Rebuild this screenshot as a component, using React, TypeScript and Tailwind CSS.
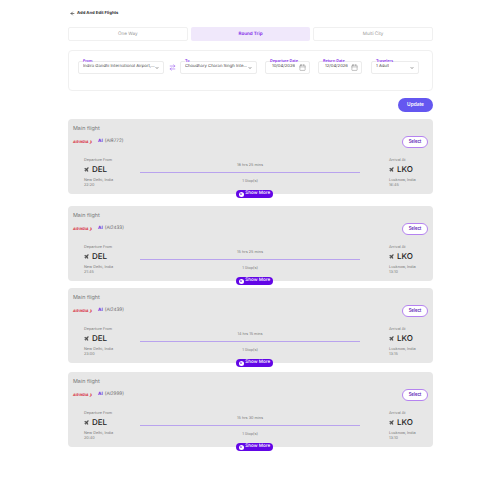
import { Plane, ArrowLeft, ChevronDown, Calendar, ArrowRightLeft, ChevronsDown } from "lucide-react";

const flights = [
  { code: "(AI8772)", dur: "18 hrs 25 mins", dep: "22:20", arr: "16:45", mt: "mt-[7px]" },
  { code: "(AI2433)", dur: "15 hrs 25 mins", dep: "21:45", arr: "13:10", mt: "mt-[12px]" },
  { code: "(AI2439)", dur: "14 hrs 15 mins", dep: "23:00", arr: "13:15", mt: "mt-[7px]" },
  { code: "(AI2999)", dur: "15 hrs 30 mins", dep: "20:40", arr: "13:10", mt: "mt-[9px]" },
];

function Field({ label, value, w, icon }: { label: string; value: string; w: string; icon: "down" | "cal" }) {
  return (
    <div className={`relative flex h-[13px] items-center justify-between rounded-[2px] border border-[#ececec] bg-white ${icon === "cal" ? "pl-[6px] pr-[3px]" : "px-[4px]"} ${w}`}>
      <span className="absolute left-[4px] top-[-4px] bg-white text-[3.8px] font-semibold leading-[5px] text-[#7c22e8]">{label}</span>
      <span className="truncate text-[4.2px] text-[#444]">{value}</span>
      {icon === "down" ? (
        <ChevronDown className="h-[4px] w-[4px] shrink-0 text-[#222]" strokeWidth={3} />
      ) : (
        <Calendar className="h-[7px] w-[7px] shrink-0 text-[#777]" strokeWidth={1.5} />
      )}
    </div>
  );
}

function Card({ f }: { f: (typeof flights)[number] }) {
  return (
    <div className={`relative h-[75px] rounded-[4px] bg-[#e7e7e7] px-[5px] pt-[7px] ${f.mt}`}>
      <div className="text-[5.4px] leading-[7px] text-[#777]">Main flight</div>
      <div className="mt-[2px] flex h-[14px] items-center justify-between">
        <div className="flex items-center gap-[5px]">
          <span className="w-[20px] whitespace-nowrap text-[3.3px] font-bold italic text-[#d81f3a]">AIR INDIA ❯</span>
          <span className="flex items-center gap-[2px] text-[4.6px] text-[#666]">
            <b className="text-[#6a2be0]">AI</b>
            {f.code}
          </span>
        </div>
        <button className="h-[12px] w-[26px] rounded-full border border-[#b583f0] bg-white text-[4.2px] font-semibold text-[#5b21b6]">
          Select
        </button>
      </div>
      <div className="mt-[8px] flex pl-[11px] pr-[6px]">
        <div className="w-[56px]">
          <div className="text-[3.8px] leading-[6px] text-[#777]">Departure From</div>
          <div className="mt-[1px] flex items-center gap-[3px] text-[8px] font-medium leading-[10px] text-[#222]">
            <Plane className="h-[5px] w-[5px] text-[#444]" fill="#444" />
            DEL
          </div>
          <div className="mt-[3px] text-[3.8px] leading-[5px] text-[#777]">New Delhi, India</div>
          <div className="text-[3.8px] leading-[6px] text-[#777]">{f.dep}</div>
        </div>
        <div className="w-[220px] pt-[5px] text-center">
          <div className="text-[3.8px] leading-[5px] text-[#777]">{f.dur}</div>
          <div className="mt-[5px] h-px bg-[#b9a3ee]" />
          <div className="mt-[5px] text-[3.8px] leading-[5px] text-[#777]">1 Stop(s)</div>
        </div>
        <div className="ml-[29px]">
          <div className="text-[3.8px] leading-[6px] text-[#777]">Arrival At</div>
          <div className="mt-[1px] flex items-center gap-[3px] text-[8px] font-medium leading-[10px] text-[#222]">
            <Plane className="h-[5px] w-[5px] text-[#444]" fill="#444" />
            LKO
          </div>
          <div className="mt-[3px] whitespace-nowrap text-[3.8px] leading-[5px] text-[#777]">Lucknow, India</div>
          <div className="text-[3.8px] leading-[6px] text-[#777]">{f.arr}</div>
        </div>
      </div>
      <div className="absolute bottom-[-4px] left-[168px] flex h-[8px] w-[37px] items-center justify-center gap-[1.5px] rounded-full bg-[#6206e6] text-[4.6px] font-medium text-white">
        <span className="flex h-[5px] w-[5px] items-center justify-center rounded-full bg-white">
          <ChevronsDown className="h-[4px] w-[4px] text-[#6206e6]" strokeWidth={3} />
        </span>
        <span className="pt-[1px]">Show More</span>
      </div>
    </div>
  );
}

export default function App() {
  return (
    <div className="min-h-[500px] bg-white pl-[68px] pr-[67px] pt-[10px] font-['Inter',sans-serif] [text-rendering:geometricPrecision]">
      <div className="flex h-[7px] items-center gap-[2px] pl-[2px] text-[4.2px] font-bold text-[#333]">
        <ArrowLeft className="h-[5px] w-[5px]" strokeWidth={3} />
        <span className="pt-[1px]">Add And Edit Flights</span>
      </div>
      <div className="mt-[10px] grid grid-cols-3 gap-[3px]">
        <div className="flex h-[14px] items-center justify-center rounded-[2px] border border-[#f0f0f0] pt-[2px] text-[4.6px] text-[#999]">One Way</div>
        <div className="flex h-[14px] items-center justify-center rounded-[2px] bg-[#f0e8fb] pt-[2px] text-[4.6px] font-semibold text-[#7c22e8]">Round Trip</div>
        <div className="flex h-[14px] items-center justify-center rounded-[2px] border border-[#f0f0f0] pt-[2px] text-[4.6px] text-[#999]">Multi City</div>
      </div>
      <div className="mt-[9px] flex h-[41px] items-start rounded-[4px] border border-[#f0f0f0] pl-[9px] pt-[10px]">
        <Field label="From" value="Indira Gandhi International Airport, ..." w="w-[86px]" icon="down" />
        <ArrowRightLeft className="mx-[4.5px] mt-[3px] h-[7px] w-[7px] text-[#9a5cf0]" strokeWidth={2} />
        <Field label="To" value="Choudhary Charan Singh Inter..." w="w-[77px]" icon="down" />
        <div className="ml-[8px]"><Field label="Departure Date" value="10/04/2026" w="w-[45px]" icon="cal" /></div>
        <div className="ml-[8px]"><Field label="Return Date" value="12/04/2026" w="w-[44px]" icon="cal" /></div>
        <div className="ml-[9px]"><Field label="Travelers" value="1 Adult" w="w-[48px]" icon="down" /></div>
      </div>
      <div className="mt-[7px] flex justify-end">
        <button className="h-[14px] w-[35px] rounded-full bg-[#6457f0] text-[4.8px] font-semibold text-white">Update</button>
      </div>
      {flights.map((f) => (
        <Card key={f.code} f={f} />
      ))}
    </div>
  );
}
